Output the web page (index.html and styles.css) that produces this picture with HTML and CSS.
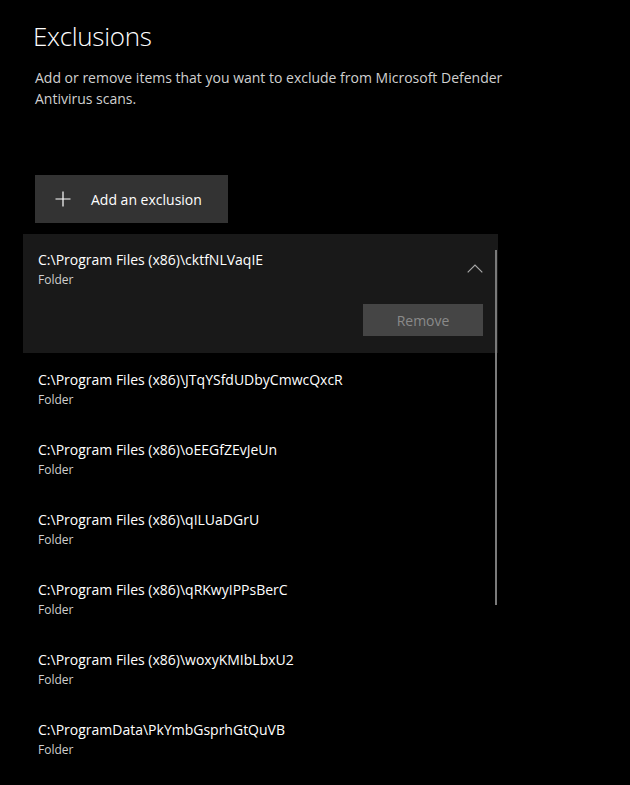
FILE: index.html
```html
<!DOCTYPE html>
<html>
<head>
<meta charset="utf-8">
<link rel="stylesheet" href="styles.css">
</head>
<body>
<div class="page">
  <h1 class="title">Exclusions</h1>
  <p class="desc">Add or remove items that you want to exclude from Microsoft Defender Antivirus scans.</p>
  <button class="add-btn">
    <svg class="plus" width="16" height="16" viewBox="0 0 16 16"><path d="M8 0.5V15.5M0.5 8H15.5" stroke="#fff" stroke-width="1.2" fill="none"/></svg>
    <span>Add an exclusion</span>
  </button>
  <div class="list">
    <div class="item expanded">
      <div class="item-head">
        <div class="item-text">
          <div class="path">C:\Program Files (x86)\cktfNLVaqIE</div>
          <div class="type">Folder</div>
        </div>
        <svg class="chev" width="16" height="9" viewBox="0 0 16 9"><path d="M0.7 8.3L8 1L15.3 8.3" stroke="#a8a8a8" stroke-width="1.2" fill="none"/></svg>
      </div>
      <div class="item-actions"><button class="remove-btn">Remove</button></div>
    </div>
    <div class="item">
      <div class="path">C:\Program Files (x86)\JTqYSfdUDbyCmwcQxcR</div>
      <div class="type">Folder</div>
    </div>
    <div class="item">
      <div class="path">C:\Program Files (x86)\oEEGfZEvJeUn</div>
      <div class="type">Folder</div>
    </div>
    <div class="item">
      <div class="path">C:\Program Files (x86)\qILUaDGrU</div>
      <div class="type">Folder</div>
    </div>
    <div class="item">
      <div class="path">C:\Program Files (x86)\qRKwyIPPsBerC</div>
      <div class="type">Folder</div>
    </div>
    <div class="item">
      <div class="path">C:\Program Files (x86)\woxyKMIbLbxU2</div>
      <div class="type">Folder</div>
    </div>
    <div class="item">
      <div class="path">C:\ProgramData\PkYmbGsprhGtQuVB</div>
      <div class="type">Folder</div>
    </div>
    <div class="scrollbar"></div>
  </div>
</div>
</body>
</html>
```

FILE: styles.css
```css
html, body {
  margin: 0;
  padding: 0;
  background: #000;
  height: 785px;
  overflow: hidden;
}
body {
  font-family: "Open Sans", "Noto Sans", sans-serif;
  color: #fff;
}
.page {
  padding: 18px 0 0 33px;
}
.title {
  margin: 0;
  font-weight: 300;
  font-size: 26px;
  line-height: 36px;
  letter-spacing: -0.3px;
}
.desc {
  margin: 13px 0 0 2px;
  width: 490px;
  font-size: 14px;
  line-height: 21px;
  color: #d0d0d0;
}
.add-btn {
  margin: 66px 0 0 2px;
  width: 193px;
  height: 48px;
  background: #333;
  border: 0;
  display: flex;
  align-items: center;
  padding: 0 0 0 20px;
  gap: 20px;
  color: #fff;
  font-family: inherit;
  font-size: 14px;
}
.list {
  position: relative;
  margin: 11px 0 0 -10px;
  width: 475px;
}
.item {
  height: 70px;
  padding: 16px 0 0 15px;
  box-sizing: border-box;
}
.item.expanded {
  height: 119px;
  background: #191919;
  padding: 16px 15px 0 15px;
  margin-bottom: 1px;
}
.item-head {
  display: flex;
  justify-content: space-between;
  align-items: flex-start;
}
.chev {
  margin-top: 14px;
}
.path {
  font-size: 14px;
  line-height: 20px;
  color: #fff;
}
.type {
  font-size: 12px;
  line-height: 19px;
  color: #cfcfcf;
}
.item-actions {
  display: flex;
  justify-content: flex-end;
  margin-top: 15px;
}
.remove-btn {
  width: 120px;
  height: 32px;
  background: #454545;
  border: 0;
  color: #8a8a8a;
  font-family: inherit;
  font-size: 14px;
}
.scrollbar {
  position: absolute;
  left: 472px;
  top: 16px;
  width: 2px;
  height: 355px;
  background: #7a7a7a;
}
```
